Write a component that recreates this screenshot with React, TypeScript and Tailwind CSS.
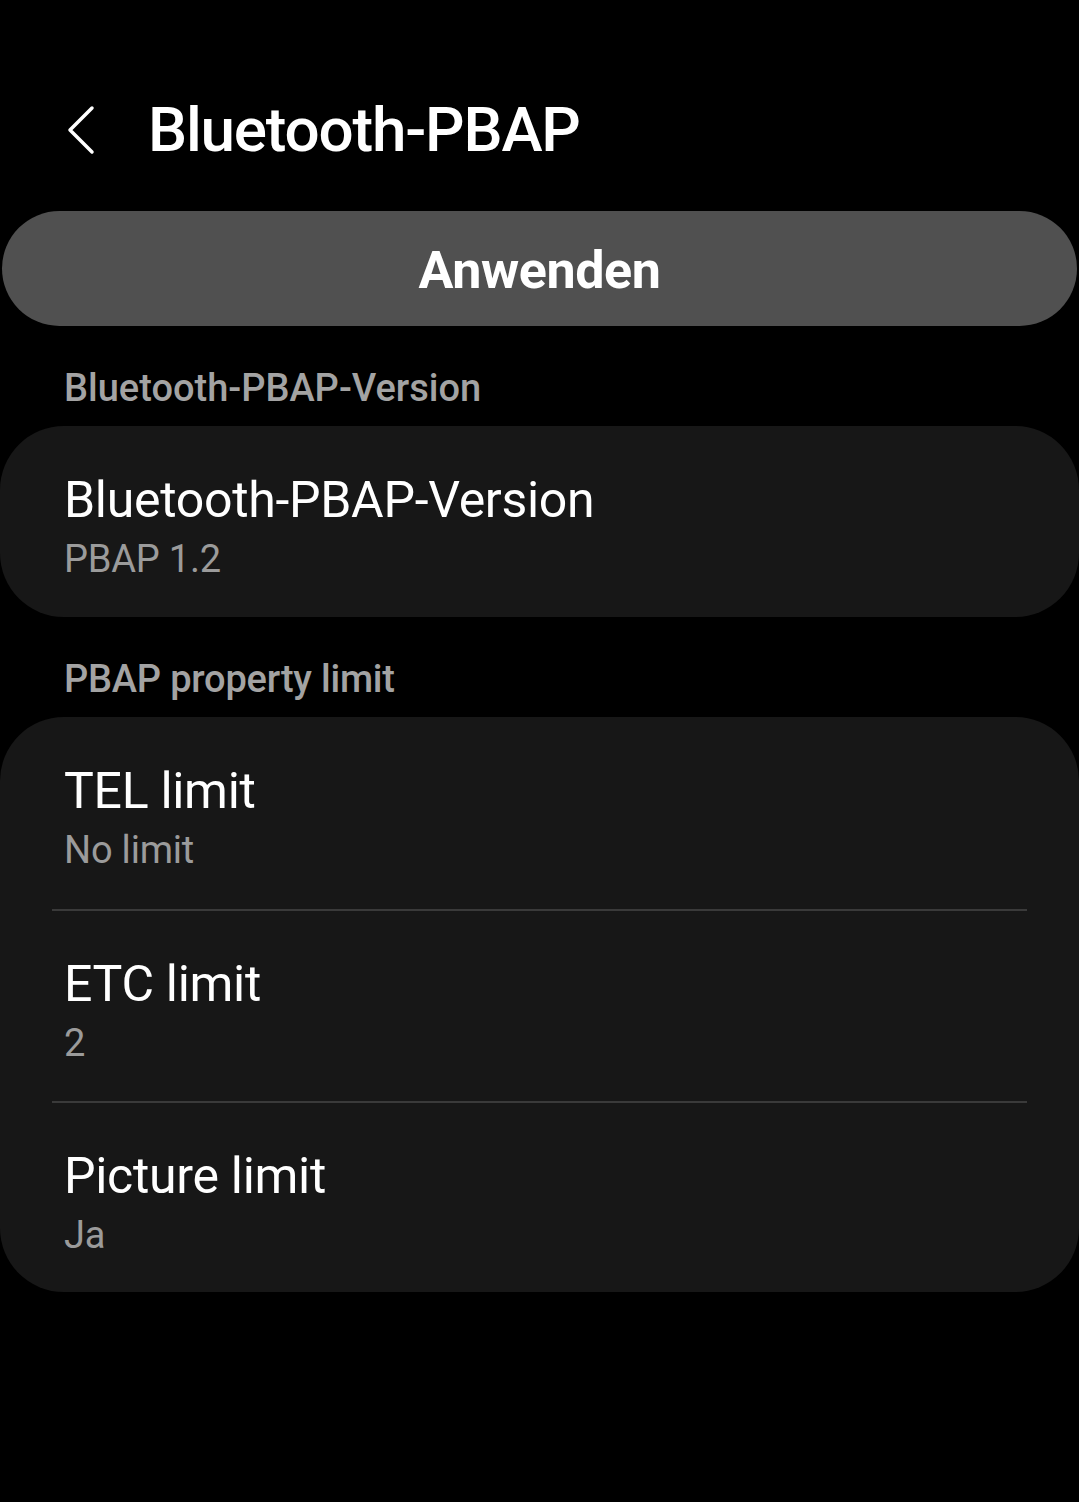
import React from "react";

const font = { fontFamily: "Roboto, 'Noto Sans', sans-serif" };

function Row({ title, value, h, last }: { title: string; value: string; h: string; last?: boolean }) {
  return (
    <div className="flex flex-col">
      <div className={`${h} flex flex-col justify-center pl-[64px] pr-[52px] pt-[8px]`}>
        <div className="text-[50px] leading-[60px] text-white tracking-[-0.3px]">{title}</div>
        <div className="text-[38px] leading-[46px] text-[#9b9b9b] mt-[6px] tracking-[-0.2px]">{value}</div>
      </div>
      {!last && <div className="mx-[52px] h-[2px] bg-[#3a3a3a]" />}
    </div>
  );
}

export default function App() {
  return (
    <div className="min-h-[1502px] w-full bg-black" style={font}>
      <div className="h-[211px] pt-[48px] flex items-center">
        <svg width="36" height="52" viewBox="0 0 36 52" className="ml-[64px]" fill="none">
          <path d="M28 4 L6 26 L28 48" stroke="#ffffff" strokeWidth="3.5" strokeLinecap="round" strokeLinejoin="round" />
        </svg>
        <div className="ml-[48px] text-[62px] leading-[70px] font-medium text-white tracking-[-1.2px]">Bluetooth-PBAP</div>
      </div>
      <div className="mx-[2px] h-[115px] rounded-full bg-[#505050] flex items-center justify-center pt-[4px]">
        <span className="text-[52px] font-bold text-white tracking-[-0.4px]">Anwenden</span>
      </div>
      <div className="h-[100px] flex items-center pl-[64px] pt-[24px]">
        <span className="text-[38px] font-medium text-[#a3a3a3] tracking-[0px]">Bluetooth-PBAP-Version</span>
      </div>
      <div className="bg-[#171717] rounded-[64px]">
        <Row title="Bluetooth-PBAP-Version" value="PBAP 1.2" h="h-[191px]" last />
      </div>
      <div className="h-[100px] flex items-center pl-[64px] pt-[24px]">
        <span className="text-[38px] font-medium text-[#a3a3a3] tracking-[-0.2px]">PBAP property limit</span>
      </div>
      <div className="bg-[#171717] rounded-[64px]">
        <Row title="TEL limit" value="No limit" h="h-[192px]" />
        <Row title="ETC limit" value="2" h="h-[190px]" />
        <Row title="Picture limit" value="Ja" h="h-[189px]" last />
      </div>
    </div>
  );
}
